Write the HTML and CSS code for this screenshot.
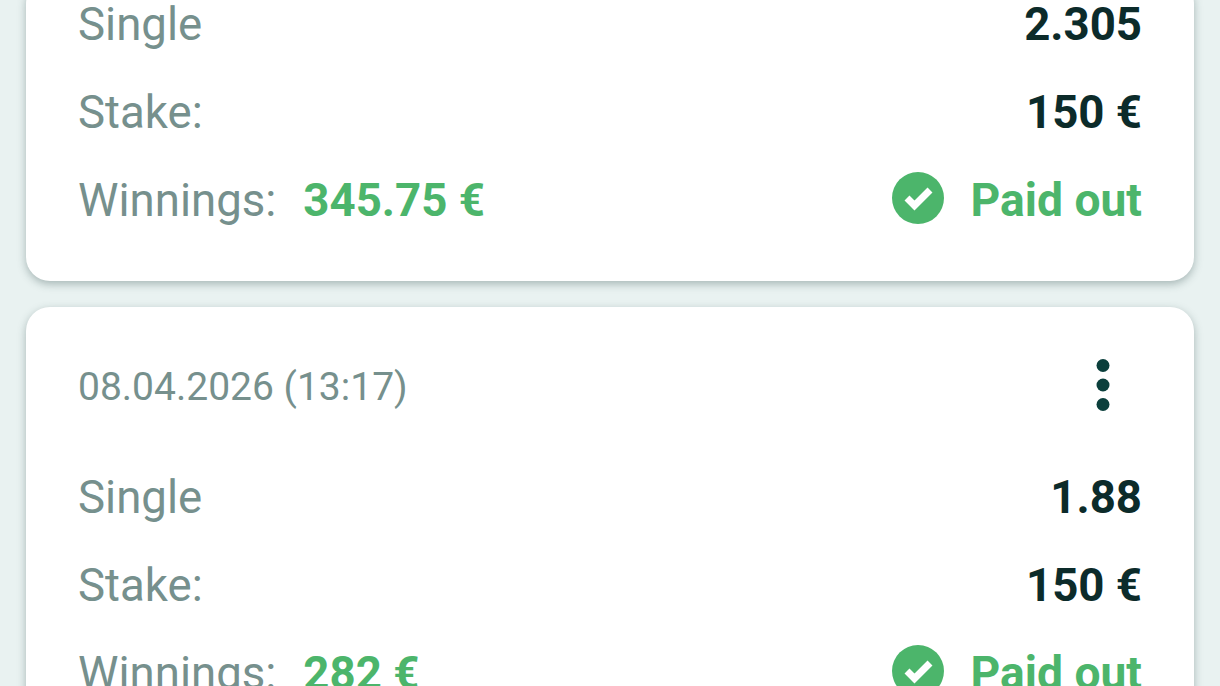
FILE: index.html
```html
<!DOCTYPE html>
<html lang="en">
<head>
    <meta charset="UTF-8" />
    <link rel="stylesheet" href="styles.css">
</head>
<body>

<div class="bets">
    <div class="card">
        <div class="row">
            <span class="label">Single</span>
            <span class="value">2.305</span>
        </div>
        <div class="row">
            <span class="label">Stake:</span>
            <span class="value">150 €</span>
        </div>
        <div class="row">
            <span class="label">Winnings:<b class="win">345.75 €</b></span>
            <span class="status">
                <svg class="check" viewBox="0 0 52 52"><circle cx="26" cy="26" r="26" fill="#4cb56b"/><path d="M15 26l7.500 7.500L38 18" fill="none" stroke="#fff" stroke-width="7"/></svg>
                Paid out
            </span>
        </div>
    </div>

    <div class="card">
        <div class="card-head">
            <span class="date">08.04.2026 (13:17)</span>
            <svg class="more" viewBox="0 0 14 52"><circle cx="7" cy="6.500" r="6.500"/><circle cx="7" cy="26" r="6.500"/><circle cx="7" cy="45.500" r="6.500"/></svg>
        </div>
        <div class="row">
            <span class="label">Single</span>
            <span class="value">1.88</span>
        </div>
        <div class="row">
            <span class="label">Stake:</span>
            <span class="value">150 €</span>
        </div>
        <div class="row">
            <span class="label">Winnings:<b class="win">282 €</b></span>
            <span class="status">
                <svg class="check" viewBox="0 0 52 52"><circle cx="26" cy="26" r="26" fill="#4cb56b"/><path d="M15 26l7.500 7.500L38 18" fill="none" stroke="#fff" stroke-width="7"/></svg>
                Paid out
            </span>
        </div>
    </div>
</div>

</body>
</html>
```
FILE: styles.css
```css
html, body {
    height: 100%;
}

body {
    font-family: Roboto, sans-serif;
    background-color: #e9f2f1;
    margin: 0;
    padding: 0;
    overflow: hidden;
}

.bets {
    display: flex;
    flex-direction: column;
    gap: 26px;
    padding: 0 26px;
    margin-top: -20px;
}

.card {
    background-color: white;
    border-radius: 24px;
    box-shadow: 0 3px 8px rgba(40, 70, 70, 0.35);
    padding: 0 52px 37px 52px;
}

.card-head {
    display: flex;
    justify-content: space-between;
    align-items: center;
    box-sizing: border-box;
    height: 146px;
    padding-top: 14px;
}

.date {
    font-size: 39px;
    color: #76908d;
}

.more {
    width: 14px;
    height: 52px;
    fill: #0b3f3c;
    margin-right: 32px;
    margin-top: -4px;
}

.row {
    display: flex;
    justify-content: space-between;
    align-items: center;
    height: 88px;
    font-size: 45.6px;
}

.label {
    color: #76908d;
}

.value {
    font-weight: 700;
    color: #0c2b2a;
}

.win {
    font-weight: 700;
    color: #4cb56b;
    margin-left: 27px;
}

.status {
    display: flex;
    align-items: center;
    gap: 26px;
    font-size: 46.2px;
    font-weight: 700;
    color: #4cb56b;
}

.check {
    width: 52px;
    height: 52px;
    margin-top: -5px;
}
```
